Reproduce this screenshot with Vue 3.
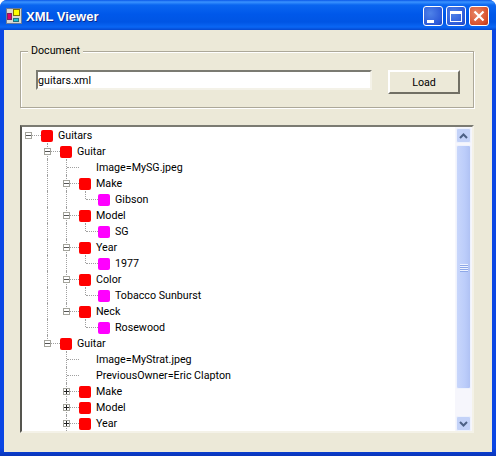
<script setup>
import { computed } from 'vue'

const tree = {
  text: 'Guitars',
  kind: 'element',
  children: [
    {
      text: 'Guitar',
      kind: 'element',
      children: [
        { text: 'Image=MySG.jpeg', kind: 'attr' },
        { text: 'Make', kind: 'element', children: [{ text: 'Gibson', kind: 'value' }] },
        { text: 'Model', kind: 'element', children: [{ text: 'SG', kind: 'value' }] },
        { text: 'Year', kind: 'element', children: [{ text: '1977', kind: 'value' }] },
        { text: 'Color', kind: 'element', children: [{ text: 'Tobacco Sunburst', kind: 'value' }] },
        { text: 'Neck', kind: 'element', children: [{ text: 'Rosewood', kind: 'value' }] }
      ]
    },
    {
      text: 'Guitar',
      kind: 'element',
      children: [
        { text: 'Image=MyStrat.jpeg', kind: 'attr' },
        { text: 'PreviousOwner=Eric Clapton', kind: 'attr' },
        { text: 'Make', kind: 'element', collapsed: true },
        { text: 'Model', kind: 'element', collapsed: true },
        // more siblings sit below the fold, so the guide keeps going
        { text: 'Year', kind: 'element', collapsed: true, hasNext: true }
      ]
    }
  ]
}

function flatten(node, guides, isLast, isRoot) {
  const hasToggle = node.collapsed || (node.children && node.children.length > 0)
  const row = {
    text: node.text,
    kind: node.kind,
    guides,
    isLast,
    isRoot,
    toggle: hasToggle ? (node.collapsed ? 'plus' : 'minus') : null
  }
  let rows = [row]
  const children = node.children || []
  children.forEach((child, i) => {
    const childGuides = [...guides, !isLast]
    const last = i === children.length - 1 && !child.hasNext
    rows = rows.concat(flatten(child, childGuides, last, false))
  })
  return rows
}

const rows = computed(() => flatten(tree, [], true, true))
</script>

<template>
  <div class="window">
    <div class="titlebar">
      <svg class="app-icon" width="16" height="16" viewBox="0 0 16 16">
        <rect x="0.5" y="0.5" width="15" height="15" fill="#d8d8d0" stroke="#6a7a98" />
        <rect x="1.5" y="5.5" width="4" height="6" fill="#e0006a" stroke="#802060" />
        <rect x="7.5" y="1.5" width="6" height="6" fill="#ffff00" stroke="#807000" />
        <rect x="7.5" y="10.5" width="5" height="3" fill="#20c0d0" stroke="#207080" />
      </svg>
      <span class="title">XML Viewer</span>
      <div class="caption-buttons">
        <button class="cap-btn"><span class="min-glyph"></span></button>
        <button class="cap-btn"><span class="max-glyph"></span></button>
        <button class="cap-btn close">
          <svg width="12" height="12" viewBox="0 0 12 12">
            <path d="M1.5 1.5 L10.5 10.5 M10.5 1.5 L1.5 10.5" stroke="#fff" stroke-width="2.2" fill="none" />
          </svg>
        </button>
      </div>
    </div>

    <div class="client">
      <div class="group">
        <span class="legend">Document</span>
        <input class="path-input" type="text" value="guitars.xml" />
        <button class="load-btn">Load</button>
      </div>

      <div class="tree-panel">
        <div class="tree-rows">
          <div v-for="(row, i) in rows" :key="i" class="row">
            <span
              v-for="(on, g) in row.guides"
              :key="g"
              class="indent"
              :class="{ on }"
            ></span>
            <span class="elbow" :class="{ root: row.isRoot, last: row.isLast }">
              <span v-if="row.toggle" class="toggle" :class="row.toggle"></span>
            </span>
            <span class="node-icon" :class="row.kind"></span>
            <span class="label">{{ row.text }}</span>
          </div>
        </div>
        <div class="scrollbar">
          <div class="sb-btn">
            <svg width="9" height="6" viewBox="0 0 9 6"><path d="M1 5 L4.5 1.5 L8 5" stroke="#4d6185" stroke-width="2" fill="none" /></svg>
          </div>
          <div class="thumb">
            <span class="grip"></span>
            <span class="grip"></span>
            <span class="grip"></span>
            <span class="grip"></span>
          </div>
          <div class="sb-btn down">
            <svg width="9" height="6" viewBox="0 0 9 6"><path d="M1 1 L4.5 4.5 L8 1" stroke="#4d6185" stroke-width="2" fill="none" /></svg>
          </div>
        </div>
      </div>
    </div>
  </div>
</template>

<style>
html,
body {
  margin: 0;
  background: #fff;
}
</style>

<style scoped>
.window {
  width: 496px;
  height: 456px;
  display: flex;
  flex-direction: column;
  box-sizing: border-box;
  background: linear-gradient(to bottom, #0a46e4 0, #0a46e4 448px, #0a35b8 456px);
  border-radius: 7px 7px 0 0;
  overflow: hidden;
  font-family: Roboto, "Liberation Sans", Arial, sans-serif;
  font-size: 10.7px;
  color: #000;
}

.titlebar {
  height: 30px;
  flex: none;
  box-sizing: border-box;
  display: flex;
  align-items: center;
  padding: 2px 7px 0 6px;
  background: linear-gradient(to bottom, #0a58e8 0, #3a93ff 2px, #0a66f0 5px, #0058ea 14px, #0055e4 22px, #0a66f4 27px, #0448d0 30px);
}

.app-icon {
  flex: none;
}

.title {
  margin-left: 4px;
  margin-top: 1px;
  font-family: "Liberation Sans", Arial, sans-serif;
  font-size: 13px;
  font-weight: 700;
  color: #fff;
  text-shadow: 1px 1px 0 #0a2a90;
}

.caption-buttons {
  margin-left: auto;
  display: flex;
  gap: 3px;
}

.cap-btn {
  width: 20px;
  height: 20px;
  padding: 0;
  box-sizing: border-box;
  position: relative;
  display: flex;
  align-items: center;
  justify-content: center;
  border: 1px solid #fff;
  border-radius: 3px;
  background: radial-gradient(circle at 35% 35%, #4f82e8, #2a58d8 75%, #1c3fb8);
}

.cap-btn.close {
  background: radial-gradient(circle at 35% 35%, #e88868, #d8502c 70%, #b83010);
}

.min-glyph {
  width: 7px;
  height: 3px;
  background: #fff;
  align-self: flex-end;
  margin: 0 5px 2px 0;
}

.max-glyph {
  width: 12px;
  height: 11px;
  box-sizing: border-box;
  border: 1px solid #fff;
  border-top-width: 3px;
}

.client {
  flex: 1;
  min-height: 0;
  margin: 0 4px 4px;
  padding: 21px 18px 19px 16px;
  display: flex;
  flex-direction: column;
  background: #ece9d8;
}

.group {
  position: relative;
  height: 58px;
  box-sizing: border-box;
  display: flex;
  align-items: flex-start;
  padding: 18px 13px 0 15px;
  border: 1px solid #aca899;
  box-shadow: inset 1px 1px 0 #fff, 1px 1px 0 #fff;
}

.legend {
  position: absolute;
  top: -8px;
  left: 7px;
  padding: 0 3px;
  font-size: 10.7px;
  line-height: 14px;
  background: #ece9d8;
}

.path-input {
  width: 336px;
  height: 20px;
  box-sizing: border-box;
  padding: 0;
  border: 2px solid;
  border-color: #7b7b72 #f4f2e8 #f4f2e8 #7b7b72;
  outline: none;
  background: #fff;
  font: 10.7px Roboto, "Liberation Sans", Arial, sans-serif;
  color: #000;
}

.load-btn {
  width: 72px;
  height: 24px;
  margin-left: 16px;
  padding: 0;
  box-sizing: border-box;
  border: 2px solid;
  border-color: #fff #716f64 #716f64 #fff;
  background: #ece9d8;
  font: 10.7px Roboto, "Liberation Sans", Arial, sans-serif;
  color: #000;
}

.tree-panel {
  margin-top: 17px;
  height: 308px;
  flex: none;
  box-sizing: border-box;
  display: flex;
  border: 2px solid;
  border-color: #7b7b72 #f4f2e8 #f4f2e8 #55554f;
  background: #fff;
}

.tree-rows {
  flex: 1;
  min-width: 0;
  overflow: hidden;
}

.row {
  height: 16px;
  display: flex;
  white-space: nowrap;
}

.indent,
.elbow {
  width: 19px;
  flex: none;
  position: relative;
}

.indent.on::before,
.elbow::before {
  content: "";
  position: absolute;
  left: 6px;
  top: 0;
  bottom: 0;
  border-left: 1px dotted #a0a0a0;
}

.elbow.last::before {
  bottom: 8px;
}

.elbow.root::before {
  display: none;
}

.elbow::after {
  content: "";
  position: absolute;
  left: 7px;
  right: 0;
  top: 8px;
  border-top: 1px dotted #a0a0a0;
}

.toggle {
  position: absolute;
  z-index: 1;
  left: 3px;
  top: 5px;
  width: 7px;
  height: 7px;
  box-sizing: border-box;
  border: 1px solid #a3a39b;
}

.toggle.plus {
  background:
    linear-gradient(#222, #222) center / 5px 1px no-repeat,
    linear-gradient(#222, #222) center / 1px 5px no-repeat,
    #fff;
}

.toggle.minus {
  background: linear-gradient(#555, #555) center / 5px 1px no-repeat #fff;
}

.node-icon {
  width: 12px;
  height: 12px;
  flex: none;
  margin-top: 3px;
  border-radius: 2px;
}

.node-icon.element {
  background: #ff0000;
}

.node-icon.value {
  background: #ff00ff;
}

.label {
  margin-left: 5px;
  padding-top: 1px;
  line-height: 16px;
  height: 15px;
}

.scrollbar {
  width: 17px;
  flex: none;
  box-sizing: border-box;
  display: flex;
  flex-direction: column;
  padding: 1px 1px 0;
  background: #f6f6fc;
}

.sb-btn {
  height: 15px;
  flex: none;
  display: flex;
  align-items: center;
  justify-content: center;
  box-sizing: border-box;
  border: 1px solid #eef2fd;
  border-radius: 2px;
  background: #c3d2f8;
}

.sb-btn.down {
  margin-top: auto;
}

.thumb {
  height: 244px;
  margin-top: 2px;
  box-sizing: border-box;
  display: flex;
  flex-direction: column;
  align-items: center;
  justify-content: center;
  gap: 1px;
  border: 1px solid #eef2fd;
  border-radius: 2px;
  background: linear-gradient(to right, #c8d6fb, #bccdfa 60%, #b0c2f4);
}

.grip {
  width: 8px;
  height: 1px;
  background: #eef3ff;
  box-shadow: 0 1px 0 #8ea8e8;
}
</style>
